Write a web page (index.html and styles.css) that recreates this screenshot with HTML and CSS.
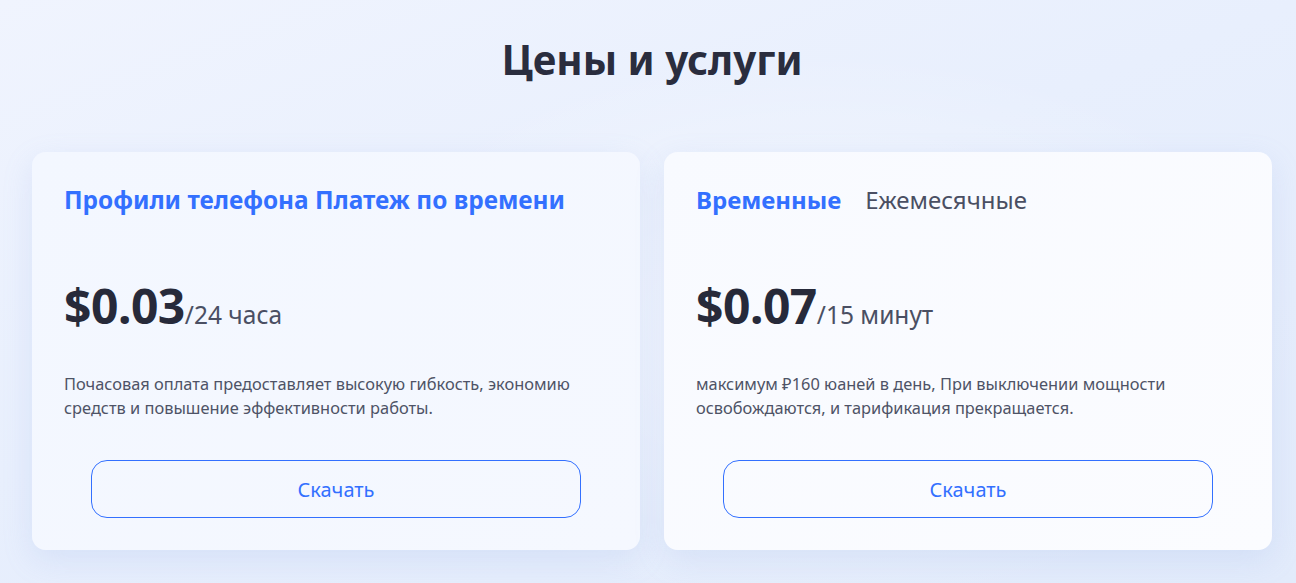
FILE: index.html
```html
<!DOCTYPE html>
<html lang="ru">
<head>
<meta charset="utf-8">
<title>Цены и услуги</title>
<link rel="stylesheet" href="styles.css">
</head>
<body>
<section class="pricing">
  <h1 class="pricing-title">Цены и услуги</h1>
  <div class="cards">
    <div class="card card-left">
      <div class="card-head">
        <span class="tab tab-active tab-wide">Профили телефона Платеж по времени</span>
      </div>
      <div class="price">
        <span class="price-value">$0.03</span><span class="price-unit">/24 часа</span>
      </div>
      <p class="desc">Почасовая оплата предоставляет высокую гибкость, экономию средств и повышение эффективности работы.</p>
      <button class="btn">Скачать</button>
    </div>
    <div class="card card-right">
      <div class="card-head">
        <span class="tab tab-active">Временные</span>
        <span class="tab">Ежемесячные</span>
      </div>
      <div class="price">
        <span class="price-value">$0.07</span><span class="price-unit">/15 минут</span>
      </div>
      <p class="desc">максимум ₽160 юаней в день, При выключении мощности освобождаются, и тарификация прекращается.</p>
      <button class="btn">Скачать</button>
    </div>
  </div>
</section>
</body>
</html>
```

FILE: styles.css
```css
* { box-sizing: border-box; }
html, body { margin: 0; padding: 0; }
body {
  width: 1296px;
  height: 583px;
  overflow: hidden;
  font-family: "Noto Sans", "Open Sans", sans-serif;
  background:
    radial-gradient(ellipse 700px 400px at 820px 330px, rgba(255,255,255,0.55), rgba(255,255,255,0) 70%),
    linear-gradient(160deg, #f0f4fe 0%, #e8effd 45%, #e2ebfb 100%);
  color: #2b2f42;
}
.pricing {
  padding: 28px 24px 0 32px;
}
.pricing-title {
  margin: 0;
  text-align: center;
  font-size: 40.3px;
  line-height: 64px;
  font-weight: 700;
  color: #2a2d3e;
}
.cards {
  margin-top: 60px;
  display: grid;
  grid-template-columns: 608px 608px;
  gap: 24px;
}
.card {
  border-radius: 14px;
  padding: 33px 32px 32px;
  display: flex;
  flex-direction: column;
  box-shadow: 0 10px 30px rgba(140, 165, 225, 0.18);
}
.card-left { background: linear-gradient(135deg, #f3f7ff, #f5f8ff); }
.card-right { background: linear-gradient(135deg, #f8faff, #fbfcff); }
.card-head {
  display: flex;
  gap: 24px;
  height: 30px;
  align-items: center;
}
.tab {
  font-size: 24px;
  line-height: 30px;
  color: #4a4f63;
  font-weight: 400;
}
.tab-active {
  color: #3370ff;
  font-weight: 700;
}
.tab-wide {
  font-size: 24.4px;
}
.price {
  margin-top: 62px;
  height: 58px;
  line-height: 58px;
  white-space: nowrap;
}
.price-value {
  font-size: 48px;
  font-weight: 700;
  color: #272a3a;
  letter-spacing: -0.5px;
}
.price-unit {
  font-size: 24.5px;
  color: #4a4f63;
}
.desc {
  margin: 37px 0 0;
  font-size: 16.4px;
  line-height: 24px;
  color: #4e5366;
  height: 48px;
}
.btn {
  margin: 40px auto 0;
  width: 490px;
  height: 58px;
  border: 1px solid #3370ff;
  border-radius: 16px;
  background: transparent;
  color: #3370ff;
  font-family: "Noto Sans", "Open Sans", sans-serif;
  font-size: 20px;
  cursor: pointer;
}
```
